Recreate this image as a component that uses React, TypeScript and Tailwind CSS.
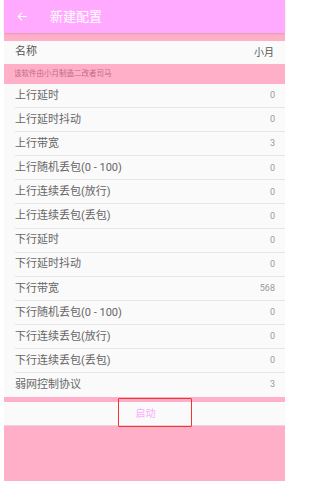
import React from "react";

const rows: [string, string][] = [
  ["上行延时", "0"],
  ["上行延时抖动", "0"],
  ["上行带宽", "3"],
  ["上行随机丢包(0 - 100)", "0"],
  ["上行连续丢包(放行)", "0"],
  ["上行连续丢包(丢包)", "0"],
  ["下行延时", "0"],
  ["下行延时抖动", "0"],
  ["下行带宽", "568"],
  ["下行随机丢包(0 - 100)", "0"],
  ["下行连续丢包(放行)", "0"],
  ["下行连续丢包(丢包)", "0"],
  ["弱网控制协议", "3"],
];

export default function App() {
  return (
    <div
      className="w-[289px] h-[483px] bg-white px-[4px] pb-[2px] flex flex-col"
      style={{ fontFamily: '"Roboto", "Noto Sans CJK SC", sans-serif' }}
    >
      <div className="h-[33px] bg-[#ffaaff] flex items-center shrink-0 relative z-10 shadow-[0_1px_2px_rgba(0,0,0,0.12)]">
        <svg width="13" height="13" viewBox="0 0 24 24" className="ml-[12px]" fill="none" stroke="white" strokeWidth="2">
          <path d="M20 12H5M11 5l-7 7 7 7" />
        </svg>
        <span className="ml-[21px] text-[13px] text-white">新建配置</span>
      </div>
      <div className="h-[8px] bg-[#ffb0c8] shrink-0" />
      <div className="h-[23px] bg-[#fafafa] flex items-center justify-between pl-[11px] pr-[11px] shrink-0">
        <span className="text-[11px] text-[#555]">名称</span>
        <span className="text-[10px] text-[#555]">小月</span>
      </div>
      <div className="h-[20px] bg-[#ffb0c8] flex items-center pl-[10px] shrink-0">
        <span className="text-[7.5px] text-[#c06a88]">该软件由小月制造二改者司马</span>
      </div>
      <div className="bg-[#fafafa] shrink-0">
        {rows.map(([label, value], i) => (
          <div key={i} className="h-[24.1px] flex items-center pl-[11px] relative">
            <div className="flex-1 flex items-center justify-between pr-[10px]">
              <span className="text-[11px] text-[#666]">{label}</span>
              <span className="text-[9px] text-[#999]">{value}</span>
            </div>
            {i < rows.length - 1 && (
              <div className="absolute left-[11px] right-0 bottom-0 h-px bg-[#e6e6e6]" />
            )}
          </div>
        ))}
      </div>
      <div className="h-[5px] bg-[#ffb0c8] shrink-0" />
      <div className="h-[24px] bg-[#fafafa] flex items-center justify-center relative shrink-0 border-b border-[#f0d0dc]">
        <span className="text-[10px] text-[#ffaaff] ml-[2px]">启动</span>
        <div className="absolute left-[114px] top-[-4px] w-[74px] h-[29px] border-[1.5px] border-[#f03535] rounded-[1px]" />
      </div>
      <div className="flex-1 bg-[#ffb0c8]" />
    </div>
  );
}
